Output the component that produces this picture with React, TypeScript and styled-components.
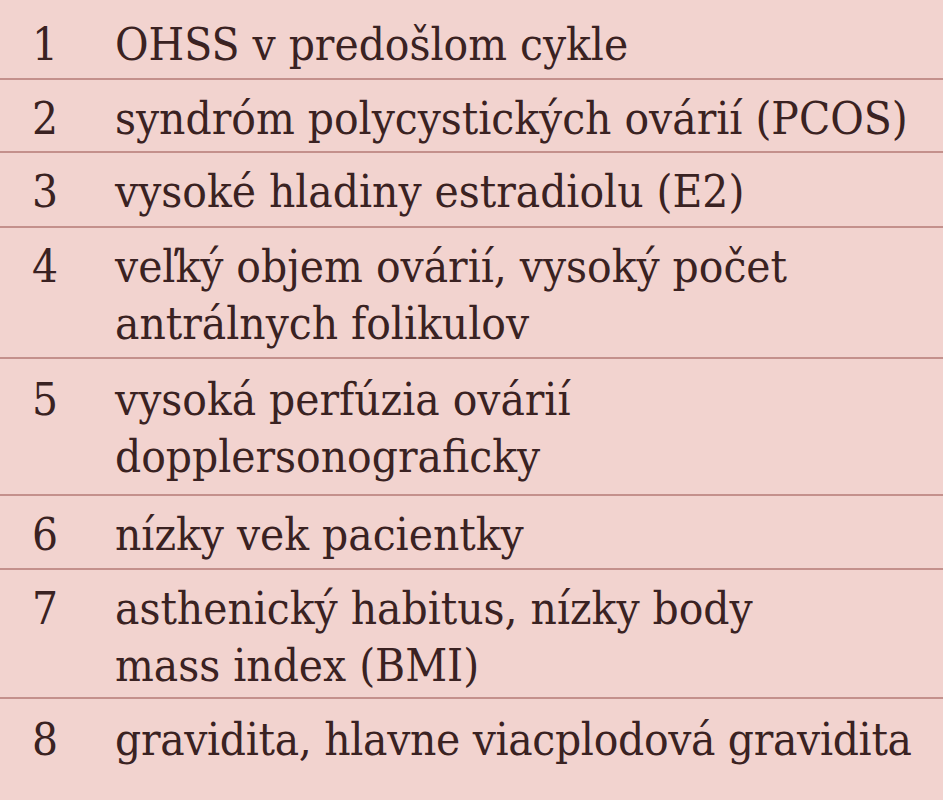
import React from 'react';
import styled, { createGlobalStyle } from 'styled-components';

const GlobalStyle = createGlobalStyle`
  html, body {
    margin: 0;
    padding: 0;
    background: #f2d3cf;
  }
`;

const Table = styled.div`
  width: 943px;
  height: 800px;
  overflow: hidden;
  background: #f2d3cf;
  font-family: 'DejaVu Serif Condensed', 'DejaVu Serif', serif;
  font-stretch: condensed;
  font-size: 45.5px;
  line-height: 57px;
  color: #3a2222;
`;

const Row = styled.div<{ $top: number; $bottom: number }>`
  display: flex;
  align-items: flex-start;
  padding: ${props => props.$top}px 0 ${props => props.$bottom}px;
  border-bottom: 2px solid #c4908c;

  &:last-child {
    border-bottom: none;
  }
`;

const Num = styled.div`
  width: 115px;
  flex: none;
  padding-left: 32px;
  box-sizing: border-box;
`;

const Text = styled.div<{ $tight?: boolean }>`
  flex: 1;
  white-space: nowrap;
  letter-spacing: ${props => (props.$tight ? '-0.3px' : 'normal')};
`;

const items: { lines: string[]; top: number; bottom: number }[] = [
  { lines: ['OHSS v predošlom cykle'], top: 16, bottom: 5 },
  { lines: ['syndróm polycystických ovárií (PCOS)'], top: 10, bottom: 4 },
  { lines: ['vysoké hladiny estradiolu (E2)'], top: 10, bottom: 6 },
  { lines: ['veľký objem ovárií, vysoký počet', 'antrálnych folikulov'], top: 10, bottom: 5 },
  { lines: ['vysoká perfúzia ovárií', 'dopplersonograficky'], top: 12, bottom: 9 },
  { lines: ['nízky vek pacientky'], top: 10, bottom: 5 },
  { lines: ['asthenický habitus, nízky body', 'mass index (BMI)'], top: 10, bottom: 3 },
  { lines: ['gravidita, hlavne viacplodová gravidita'], top: 12, bottom: 5 },
];

const App: React.FC = () => (
  <>
    <GlobalStyle />
    <Table>
      {items.map((item, i) => (
        <Row key={i} $top={item.top} $bottom={item.bottom}>
          <Num>{i + 1}</Num>
          <Text $tight={i === items.length - 1}>
            {item.lines.map((l, j) => (
              <div key={j}>{l}</div>
            ))}
          </Text>
        </Row>
      ))}
    </Table>
  </>
);

export default App;
